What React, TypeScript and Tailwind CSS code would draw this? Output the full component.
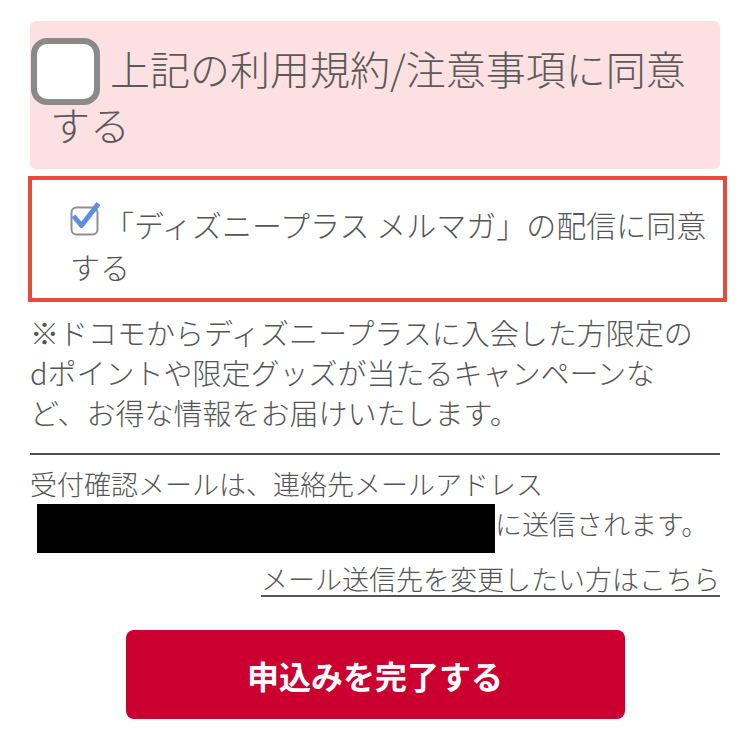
// Consent section — terms checkbox, newsletter opt-in, mail notice, submit button
export default function App() {
  return (
    <div className="w-[749px] h-[745px] overflow-hidden bg-white font-['Noto_Sans_CJK_JP',sans-serif] font-light text-[#555]">
      <div className="pl-[30px] pr-[29px] pt-[21px]">
        {/* terms agreement */}
        <div className="rounded-[6px] bg-[#fde0e1] pt-[20px] pb-[17px] pl-[20px] pr-[10px]">
          <p className="text-[40px] leading-[55px] text-[#5a5a5a]">
            <span className="inline-block w-[69px] h-[67px] rounded-[16px] border-[6px] border-[#8a8a8a] bg-white ml-[-19px] mr-[10px] my-[-8px] align-[-12px]" />
            上記の利用規約/注意事項に同意する
          </p>
        </div>

        {/* newsletter opt-in */}
        <div className="mt-[7px] ml-[-2px] mr-[-7px] border-4 border-[#e64c3c] pt-[23px] pb-[11px] pl-[38px] pr-[8px]">
          <p className="text-[30px] leading-[42px]">
            <svg width="30" height="36" viewBox="0 0 30 36" className="inline-block align-baseline mt-[-6px] mr-[4px]">
              <rect x="1.5" y="6.5" width="26" height="27" rx="5" fill="#fff" stroke="#8f8f8f" strokeWidth="2" />
              <path d="M3.5 15 L11.5 24.5 L28.5 2.5" fill="none" stroke="#5b8ee6" strokeWidth="5" strokeLinejoin="round" />
            </svg>
            「ディズニープラス メルマガ」の配信に同意する
          </p>
        </div>

        <p className="mt-[10px] mr-[15px] text-[29px] leading-[40px]">
          ※ドコモからディズニープラスに入会した方限定のdポイントや限定グッズが当たるキャンペーンなど、お得な情報をお届けいたします。
        </p>

        <div className="mt-[21px] h-[2px] bg-[#4b5056]" />

        <p className="mt-[9px] text-[27px] leading-[40px]">
          受付確認メールは、連絡先メールアドレス
          <span className="inline-block w-[458px] h-[49px] ml-[7px] bg-black align-top" />
          に送信されます。
        </p>
        <p className="mt-[6px] text-right text-[27px] leading-[40px]">
          <a href="#" className="underline decoration-[1.5px] underline-offset-[5px]">
            メール送信先を変更したい方はこちら
          </a>
        </p>

        <button className="mx-auto mt-[31px] flex h-[89px] w-[499px] items-center justify-center rounded-[8px] bg-[#cb0031] text-[32px] font-bold text-white">
          申込みを完了する
        </button>
      </div>
    </div>
  )
}
